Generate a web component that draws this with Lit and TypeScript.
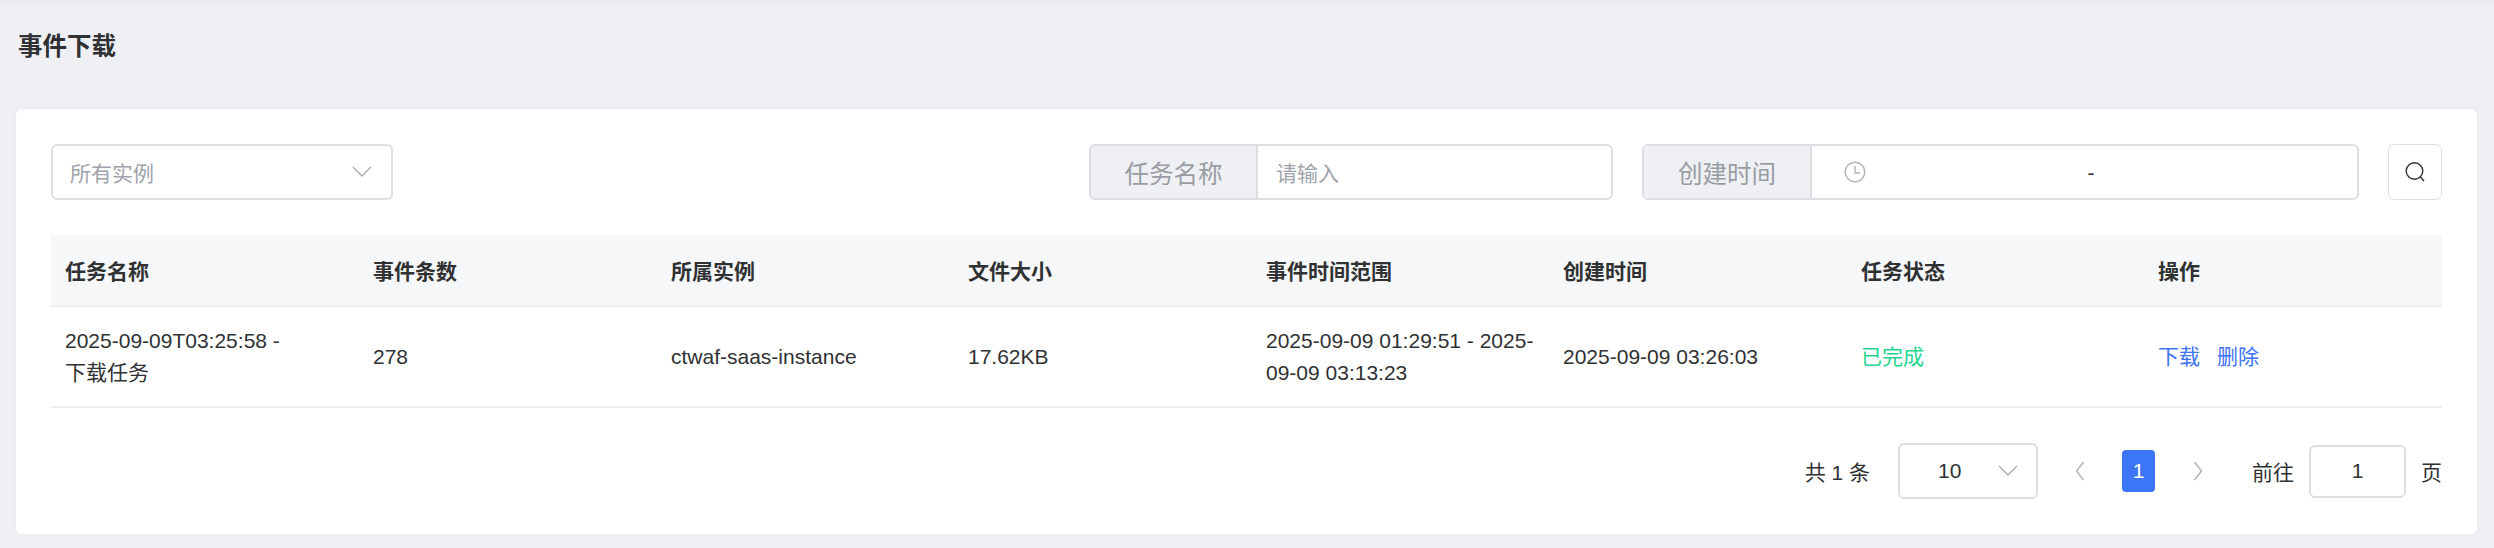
import { LitElement, html, css, svg } from 'lit';
import { customElement } from 'lit/decorators.js';

const columns = [
  { title: '任务名称', width: 308 },
  { title: '事件条数', width: 298 },
  { title: '所属实例', width: 297 },
  { title: '文件大小', width: 298 },
  { title: '事件时间范围', width: 297 },
  { title: '创建时间', width: 298 },
  { title: '任务状态', width: 297 },
  { title: '操作', width: 298 },
];

const chevronDown = svg`<path d="M2 6l9 9 9-9" fill="none" stroke="currentColor" stroke-width="1.4"/>`;
const chevronLeft = svg`<path d="M10 2L3 11l7 9" fill="none" stroke="currentColor" stroke-width="1.4"/>`;
const chevronRight = svg`<path d="M3 2l7 9-7 9" fill="none" stroke="currentColor" stroke-width="1.4"/>`;

@customElement('app-root')
export class AppRoot extends LitElement {
  static styles = css`
    :host {
      display: block;
      height: 548px;
      overflow: hidden;
      background: #eef0f4;
      box-shadow: inset 0 7px 6px -5px #e4e6ea;
      font-family: 'Liberation Sans', 'Noto Sans CJK SC', sans-serif;
      font-size: 21px;
      color: #303133;
    }
    .page-title {
      height: 109px;
      padding: 31px 0 0 18px;
      box-sizing: border-box;
      font-size: 24.5px;
      line-height: 32px;
      font-weight: 700;
      color: #303133;
    }
    .card {
      margin: 0 17px 0 16px;
      padding: 35px;
      height: 425px;
      box-sizing: border-box;
      background: #fff;
      border-radius: 6px;
      box-shadow: 0 -1px 4px #e6e8ec;
    }
    .toolbar {
      display: flex;
      align-items: stretch;
      height: 56px;
      gap: 29px;
    }
    .control {
      box-sizing: border-box;
      border: 2px solid #dcdee2;
      border-radius: 6px;
      background: #fff;
      display: flex;
      align-items: center;
    }
    .instance {
      width: 342px;
      margin-right: auto;
      padding: 0 18px 0 17px;
      justify-content: space-between;
      color: #a0a3ab;
    }
    .arrow {
      width: 22px;
      height: 22px;
      color: #a8abb2;
      flex: none;
    }
    .group {
      display: flex;
      overflow: hidden;
    }
    .group-name {
      width: 524px;
    }
    .group-name .addon {
      width: 167px;
    }
    .group-date {
      width: 717px;
    }
    .addon {
      flex: none;
      box-sizing: border-box;
      width: 168px;
      height: 100%;
      display: flex;
      align-items: center;
      justify-content: center;
      background: #eef0f4;
      border-right: 2px solid #dcdee2;
      color: #9a9ca3;
      font-size: 24.5px;
    }
    .placeholder {
      padding-left: 18px;
      color: #a0a3ab;
    }
    .range {
      flex: 1;
      display: flex;
      align-items: center;
      padding: 0 41px 0 32px;
    }
    .clock {
      width: 22px;
      height: 22px;
      flex: none;
      color: #b4b6bc;
    }
    .dash {
      flex: 1;
      text-align: center;
      color: #303133;
      line-height: 1;
    }
    .search {
      width: 54px;
      box-sizing: border-box;
      padding: 0 1px 0 0;
      border: 1px solid #dcdee2;
      border-radius: 6px;
      background: #fff;
      display: flex;
      align-items: center;
      justify-content: center;
    }
    .search svg {
      width: 22px;
      height: 22px;
    }
    table {
      margin-top: 35px;
      width: 2391px;
      border-collapse: collapse;
      table-layout: fixed;
    }
    th {
      height: 71px;
      padding: 0 14px;
      text-align: left;
      background: #f6f7f9;
      border-bottom: 2px solid #eceef2;
      font-weight: 700;
      box-sizing: border-box;
    }
    td {
      height: 101px;
      padding: 0 14px;
      line-height: 32px;
      box-sizing: border-box;
      border-bottom: 2px solid #eceef2;
      color: #303133;
    }
    .keep {
      white-space: nowrap;
    }
    .done {
      color: #1fd58f;
    }
    .actions {
      display: flex;
      gap: 17px;
      color: #3d73f5;
    }
    .pager {
      margin-top: 35px;
      height: 56px;
      display: flex;
      align-items: center;
      justify-content: flex-end;
    }
    .total {
      margin-right: 28px;
    }
    .size {
      width: 140px;
      height: 56px;
      padding: 0 17px 0 38px;
      justify-content: space-between;
    }
    .nav {
      width: 22px;
      height: 22px;
      color: #b0b2b8;
    }
    .prev {
      margin: 0 31px 0 31px;
    }
    .next {
      margin: 0 43px 0 32px;
    }
    .current {
      width: 33px;
      height: 42px;
      border-radius: 4px;
      background: #3d75f7;
      color: #fff;
      display: flex;
      align-items: center;
      justify-content: center;
    }
    .jump {
      width: 97px;
      height: 53px;
      margin: 0 15px;
      justify-content: center;
    }
  `;

  render() {
    return html`
      <div class="page-title">事件下载</div>
      <div class="card">
        <div class="toolbar">
          <div class="control instance">
            <span>所有实例</span>
            <svg class="arrow" viewBox="0 0 22 22">${chevronDown}</svg>
          </div>
          <div class="control group group-name">
            <div class="addon">任务名称</div>
            <div class="placeholder">请输入</div>
          </div>
          <div class="control group group-date">
            <div class="addon">创建时间</div>
            <div class="range">
              <svg class="clock" viewBox="0 0 22 22" fill="none" stroke="currentColor" stroke-width="1.5">
                <circle cx="11" cy="11" r="9.8" />
                <path d="M11 5v7h5" />
              </svg>
              <span class="dash">-</span>
            </div>
          </div>
          <button class="search" aria-label="搜索">
            <svg viewBox="0 0 22 22" fill="none" stroke="#303133" stroke-width="1.4">
              <circle cx="10.5" cy="10" r="8.3" />
              <path d="M16.4 16l3.6 4" />
            </svg>
          </button>
        </div>
        <table>
          <colgroup>
            ${columns.map(c => html`<col style="width:${c.width}px" />`)}
          </colgroup>
          <thead>
            <tr>${columns.map(c => html`<th>${c.title}</th>`)}</tr>
          </thead>
          <tbody>
            <tr>
              <td>2025-09-09T03:25:58 - <span class="keep">下载任务</span></td>
              <td>278</td>
              <td>ctwaf-saas-instance</td>
              <td>17.62KB</td>
              <td>2025-09-09 01:29:51 - 2025-09-09 03:13:23</td>
              <td>2025-09-09 03:26:03</td>
              <td class="done">已完成</td>
              <td><div class="actions"><span>下载</span><span>删除</span></div></td>
            </tr>
          </tbody>
        </table>
        <div class="pager">
          <span class="total">共 1 条</span>
          <div class="control size">
            <span>10</span>
            <svg class="arrow" viewBox="0 0 22 22">${chevronDown}</svg>
          </div>
          <svg class="nav prev" viewBox="0 0 13 22">${chevronLeft}</svg>
          <div class="current">1</div>
          <svg class="nav next" viewBox="0 0 13 22">${chevronRight}</svg>
          <span>前往</span>
          <div class="control jump">1</div>
          <span>页</span>
        </div>
      </div>
    `;
  }
}
